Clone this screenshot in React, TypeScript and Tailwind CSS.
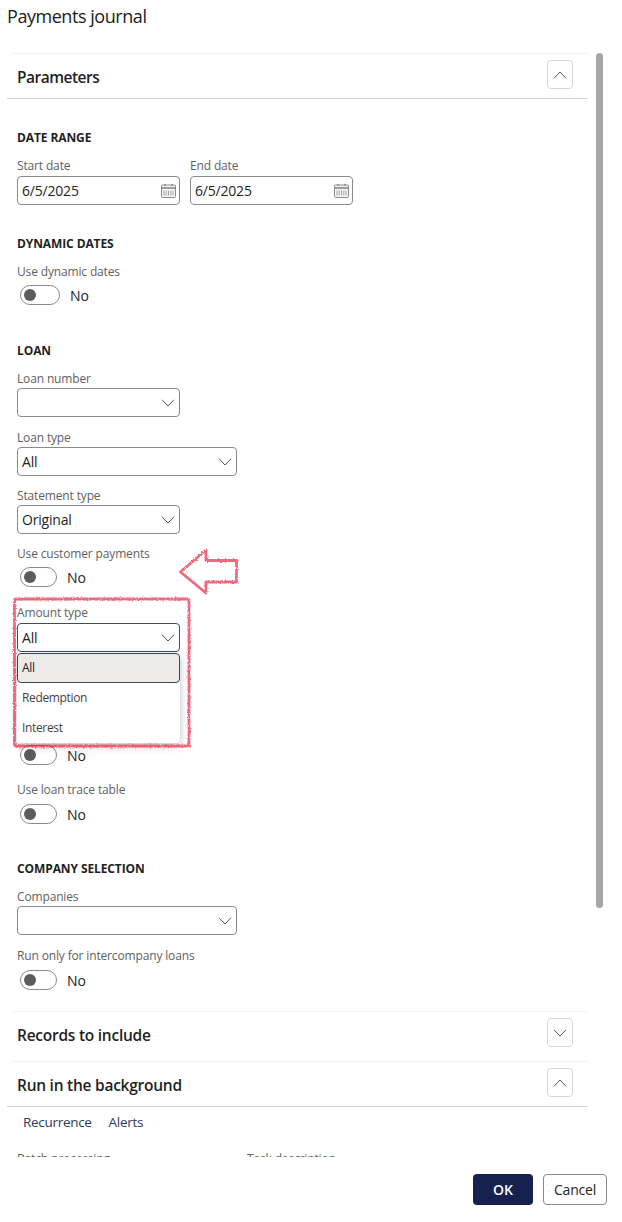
import React from "react";

function Chevron({ up = false, className = "" }: { up?: boolean; className?: string }) {
  return (
    <svg width="14" height="8" viewBox="0 0 14 8" fill="none" className={className}>
      <path d={up ? "M1 7.2L7 1L13 7.2" : "M1 .8L7 7L13 .8"} stroke="#555" strokeWidth="1" />
    </svg>
  );
}

function CalendarIcon() {
  return (
    <svg width="15" height="14" viewBox="0 0 15 14" fill="none">
      <rect x=".5" y="1" width="14" height="12.5" rx="1" fill="#f4f4f4" stroke="#8a8a8a" />
      <path d="M.5 4h14" stroke="#777" strokeWidth="1.4" />
      <path d="M4 0v2M11 0v2" stroke="#777" />
      <path d="M3 6.5v5M5.2 6.5v5M7.5 6.5v5M9.8 6.5v5M12 6.5v5" stroke="#a5a5a5" />
    </svg>
  );
}

function SectionTitle({ children, className = "" }: { children: React.ReactNode; className?: string }) {
  return <div className={`h-4 pt-px text-[12px] leading-4 font-bold tracking-[-0.1px] text-[#1f1f1f] ${className}`}>{children}</div>;
}

function Label({ children, className = "" }: { children: React.ReactNode; className?: string }) {
  return <div className={`h-[18px] text-[12px] leading-[20px] tracking-[-0.15px] text-[#616161] ${className}`}>{children}</div>;
}

function Select({ value, wide = false, focus = false, className = "" }: { value?: string; wide?: boolean; focus?: boolean; className?: string }) {
  return (
    <div
      className={`flex h-[29px] items-center justify-between rounded-[4px] border pl-[4px] pr-[4px] text-[14px] tracking-[-0.2px] text-[#242424] ${
        wide ? "w-[220px]" : "w-[163px]"
      } ${focus ? "border-[#3d4a75]" : "border-[#8a8a8a]"} ${className}`}
    >
      <span>{value}</span>
      <Chevron />
    </div>
  );
}

function DateInput({ value, className = "" }: { value: string; className?: string }) {
  return (
    <div className={`flex h-[29px] items-center justify-between rounded-[4px] border border-[#8a8a8a] pl-[4px] pr-[3px] text-[14px] tracking-[-0.2px] text-[#242424] ${className}`}>
      <span>{value}</span>
      <CalendarIcon />
    </div>
  );
}

function Toggle({ wide = false, className = "" }: { wide?: boolean; className?: string }) {
  return (
    <div className={`ml-[3px] flex h-5 items-center ${className}`}>
      <div className={`flex h-5 items-center rounded-full border border-[#8a8a8a] pl-[3px] ${wide ? "w-10" : "w-[37px]"}`}>
        <div className="h-3 w-3 rounded-full bg-[#5c5c5c]" />
      </div>
      <span className="ml-[10px] text-[14px] text-[#242424]">No</span>
    </div>
  );
}

function CollapseButton({ up = false }: { up?: boolean }) {
  return (
    <div className="flex h-[29px] w-[26px] items-center justify-center rounded-[4px] border border-[#d6d6d6] bg-white">
      <Chevron up={up} />
    </div>
  );
}

function Annotation() {
  return (
    <svg className="pointer-events-none absolute left-0 top-[540px]" width="260" height="215" viewBox="0 0 260 215" fill="none">
      <defs>
        <filter id="rough" x="-5%" y="-5%" width="110%" height="110%">
          <feTurbulence type="fractalNoise" baseFrequency="0.6" numOctaves="2" seed="4" />
          <feDisplacementMap in="SourceGraphic" scale="3" />
        </filter>
      </defs>
      <g filter="url(#rough)" stroke="#e62a42" strokeWidth="2.8" strokeOpacity=".7" strokeLinejoin="round">
        <rect x="14.5" y="59" width="174.5" height="147" rx="2" />
        <path d="M180.5 32L206 10V20.5H236.5V42H206V53Z" />
      </g>
    </svg>
  );
}

export default function App() {
  return (
    <div className="relative flex h-[1222px] w-[622px] flex-col overflow-hidden bg-white font-['Open_Sans',sans-serif] text-[#242424]">
      <div className="h-[53px] pl-[7px] pt-[2px] text-[18px] leading-[28px] tracking-[-0.45px] text-[#1b1b1b]">Payments journal</div>

      <div className="flex h-[1104px]">
        <div className="h-full w-[588px] overflow-hidden pl-[7px]">
          <div className="ml-[5px] border-t border-[#f3f3f3]" />
          <div className="flex h-[45px] items-start justify-between border-b border-[#d4d4d4] pl-[10px] pr-[15px] pt-[6px]">
            <span className="mt-[5px] text-[15.5px] leading-6 font-semibold tracking-[-0.5px] text-[#1f1f1f]">Parameters</span>
            <CollapseButton up />
          </div>

          <div className="pl-[10px]">
            <SectionTitle className="mt-[30px]">DATE RANGE</SectionTitle>
            <div className="mt-[11px] flex gap-[10px]">
              <div className="w-[163px]">
                <Label className="mb-[2px]">Start date</Label>
                <DateInput value="6/5/2025" />
              </div>
              <div className="w-[163px]">
                <Label className="mb-[2px]">End date</Label>
                <DateInput value="6/5/2025" />
              </div>
            </div>

            <SectionTitle className="mt-[30px]">DYNAMIC DATES</SectionTitle>
            <Label className="mt-[11px] mb-[5px]">Use dynamic dates</Label>
            <Toggle wide />

            <SectionTitle className="mt-[37px]">LOAN</SectionTitle>
            <Label className="mt-[11px] mb-[1px]">Loan number</Label>
            <Select />
            <Label className="mt-[11px] mb-[1px]">Loan type</Label>
            <Select value="All" wide />
            <Label className="mt-[10px] mb-[1px]">Statement type</Label>
            <Select value="Original" />
            <Label className="mt-[10px] mb-[5px]">Use customer payments</Label>
            <Toggle />
            <Label className="mt-[16px] mb-[2px]">Amount type</Label>
            <Select value="All" focus />
            <Toggle className="mt-[93px]" />
            <Label className="mt-[15px] mb-[6px]">Use loan trace table</Label>
            <Toggle />

            <SectionTitle className="mt-[36px]">COMPANY SELECTION</SectionTitle>
            <Label className="mt-[11px] mb-[1px]">Companies</Label>
            <Select wide />
            <Label className="mt-[11px] mb-[6px]">Run only for intercompany loans</Label>
            <Toggle />
          </div>

          <div className="ml-[5px] mt-[21px] border-t border-[#f3f3f3]" />
          <div className="flex h-[49px] items-start justify-between pl-[10px] pr-[15px] pt-[6px]">
            <span className="mt-[5px] text-[15.5px] leading-6 font-semibold tracking-[-0.25px] text-[#1f1f1f]">Records to include</span>
            <CollapseButton />
          </div>
          <div className="ml-[5px] border-t border-[#f3f3f3]" />
          <div className="flex h-[45px] items-start justify-between border-b border-[#d4d4d4] pl-[10px] pr-[15px] pt-[6px]">
            <span className="mt-[5px] text-[15.5px] leading-6 font-semibold tracking-[-0.25px] text-[#1f1f1f]">Run in the background</span>
            <CollapseButton up />
          </div>

          <div className="flex gap-[17px] pl-[16px] pt-[5px] text-[13.5px] leading-5 tracking-[-0.3px] text-[#2f3a5c]">
            <span>Recurrence</span>
            <span>Alerts</span>
          </div>
          <div className="mt-[17px] flex pl-[10px]">
            <Label className="w-[230px]">Batch processing</Label>
            <Label>Task description</Label>
          </div>
        </div>

        <div className="ml-[8px] h-[855px] w-[7px] rounded-full bg-[#a6a6a6]" />
      </div>

      <div className="flex flex-1 items-start justify-end gap-[10px] pr-[15px] pt-[17px]">
        <div className="flex h-[31px] w-[60px] items-center justify-center rounded-[4px] bg-[#16214f] text-[14px] font-semibold text-white">OK</div>
        <div className="flex h-[31px] w-[64px] items-center justify-center rounded-[4px] border border-[#8a8a8a] text-[14px] tracking-[-0.2px] text-[#242424]">Cancel</div>
      </div>

      <div className="absolute left-[17px] top-[653px] h-[90px] w-[163px] rounded-b-[4px] bg-white text-[12px] tracking-[-0.35px] text-[#424242] shadow-[0_3px_8px_rgba(0,0,0,0.25)]">
        <div className="flex h-[30px] items-center rounded-[4px] border border-[#444] bg-[#edebe9] pl-[4px] text-[#242424]">All</div>
        <div className="flex h-[30px] items-center pl-[5px]">Redemption</div>
        <div className="flex h-[30px] items-center pl-[5px]">Interest</div>
      </div>

      <Annotation />
    </div>
  );
}
